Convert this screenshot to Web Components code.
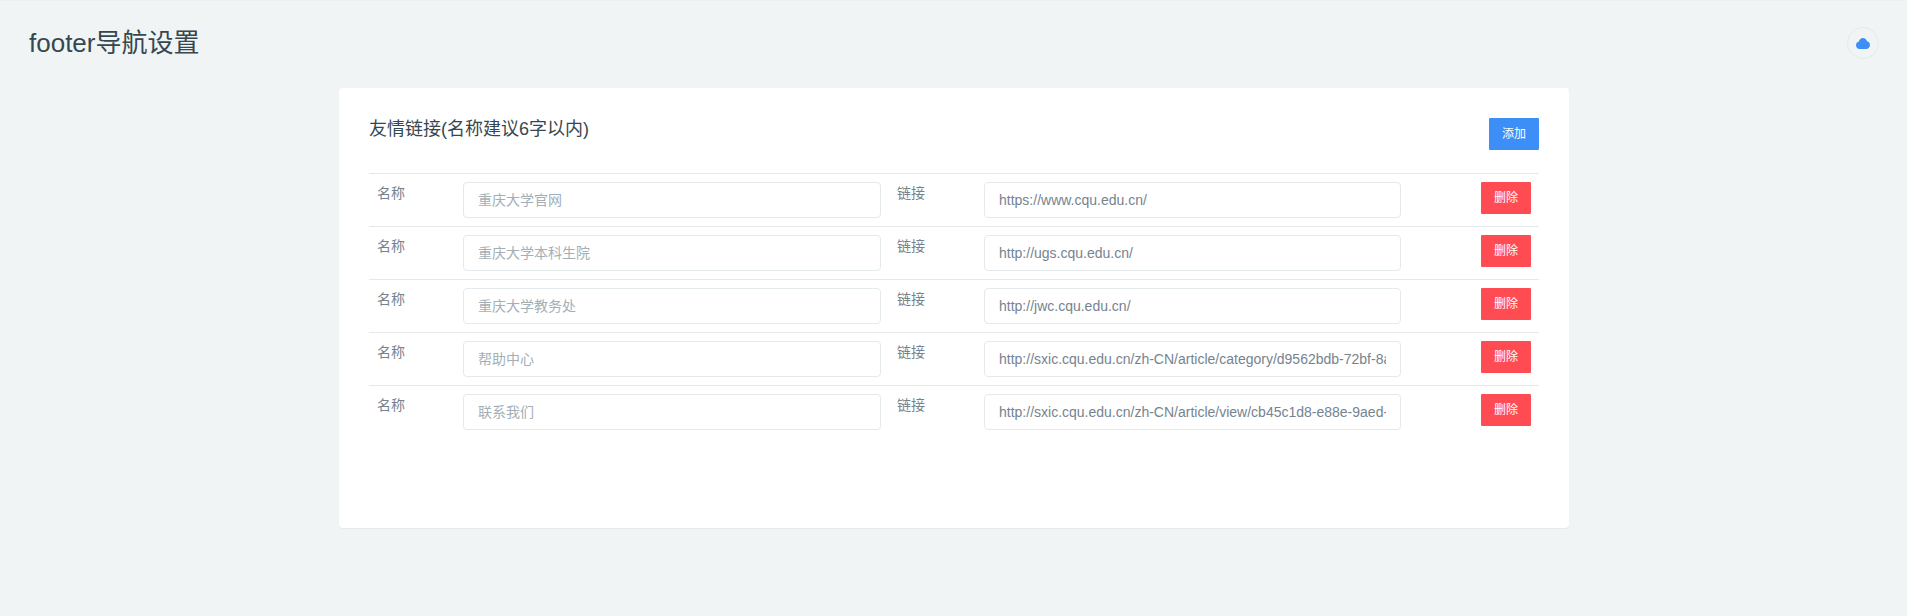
<!DOCTYPE html>
<html lang="zh-CN"><head><meta charset="utf-8"><title>footer导航设置</title>
<style>
html,body{margin:0;height:100%;overflow:hidden}
body{background:#f1f4f5;font-family:"Liberation Sans","Noto Sans CJK SC",sans-serif;color:#76838f;font-size:14px;line-height:22px}
</style></head><body>
<page-view>
  <page-header slot="header" title="footer导航设置"></page-header>
  <link-card title="友情链接(名称建议6字以内)">
    <link-row name="重庆大学官网" url="https://www.cqu.edu.cn/"></link-row>
    <link-row name="重庆大学本科生院" url="http://ugs.cqu.edu.cn/"></link-row>
    <link-row name="重庆大学教务处" url="http://jwc.cqu.edu.cn/"></link-row>
    <link-row name="帮助中心" url="http://sxic.cqu.edu.cn/zh-CN/article/category/d9562bdb-72bf-8a"></link-row>
    <link-row name="联系我们" url="http://sxic.cqu.edu.cn/zh-CN/article/view/cb45c1d8-e88e-9aed-"></link-row>
  </link-card>
</page-view>
<script>
function define(name, html, init){
  customElements.define(name, class extends HTMLElement{
    connectedCallback(){
      if(this.shadowRoot) return;
      const r=this.attachShadow({mode:'open'});
      r.innerHTML=html;
      if(init) init(this,r);
    }
  });
}
define('page-view',`<style>
:host{display:block;height:616px;box-sizing:border-box;border-top:1px solid #eceff1}
main{display:flex;flex-direction:column;align-items:flex-start;padding-left:339px}
</style><slot name="header"></slot><main><slot></slot></main>`);
define('page-header',`<style>
:host{display:flex;align-items:center;justify-content:space-between;height:87px;padding:0 28px 3px 29px;box-sizing:border-box}
h1{margin:0;font-weight:400;font-size:26px;line-height:30px;color:#37474f}
</style><h1></h1><cloud-badge></cloud-badge>`,(h,r)=>{r.querySelector('h1').textContent=h.getAttribute('title')});
define('cloud-badge',`<style>
:host{display:flex;align-items:center;justify-content:center;width:32px;height:32px;box-sizing:border-box;border:1px solid #e4eaec;border-radius:50%}
svg{display:block;width:14px;height:11px}
</style><svg viewBox="0 0 14 11"><path fill="#3e8ef7" d="M7 0c2 0 3.600 1.300 4 3.200 1.700.3 3 1.600 3 3.600 0 2.400-1.700 4.200-3.800 4.200H3.600C1.500 11 0 9.300 0 7.200 0 5.300 1.200 3.800 2.900 3.400 3.400 1.400 5 0 7 0z"/></svg>`);
define('link-card',`<style>
:host{display:block;width:1230px;height:440px;box-sizing:border-box;padding:30px;background:#fff;border-radius:4px;box-shadow:0 1px 1px rgba(0,0,0,.05)}
header{display:flex;justify-content:space-between;align-items:flex-start;height:55px}
h2{margin:0;font-weight:400;font-size:18px;line-height:22px;color:#37474f}
</style><header><h2></h2><ui-button kind="primary">添加</ui-button></header><slot></slot>`,(h,r)=>{r.querySelector('h2').textContent=h.getAttribute('title')});
define('ui-button',`<style>
:host{display:block;width:50px;height:32px;box-sizing:border-box;border-radius:1px;background:#3e8ef7;color:#fff;font-size:12px;line-height:32px;text-align:center}
:host([kind=danger]){background:#ff4c52}
</style><slot></slot>`);
define('text-field',`<style>
:host{display:block;height:36px;box-sizing:border-box;padding:0 14px;border:1px solid #e4eaec;border-radius:4px;background:#fff;color:#76838f;font-size:14px;line-height:34px}
:host([placeholder]){color:#a3afb7}
div{overflow:hidden;white-space:nowrap}
</style><div><slot></slot></div>`);
define('link-row',`<style>
:host{display:grid;grid-template-columns:86px 434px 87px 433px 130px;height:53px;box-sizing:border-box;border-top:1px solid #e4eaec;padding-top:8px}
span{padding-left:8px;line-height:22px}
text-field{margin-left:8px;margin-right:8px}
ui-button{justify-self:end;margin-right:8px}
</style><span>名称</span><text-field placeholder class="n"></text-field><span>链接</span><text-field class="u"></text-field><ui-button kind="danger">删除</ui-button>`,(h,r)=>{
  r.querySelector('.n').textContent=h.getAttribute('name');
  r.querySelector('.u').textContent=h.getAttribute('url');
});
</script>
</body></html>
